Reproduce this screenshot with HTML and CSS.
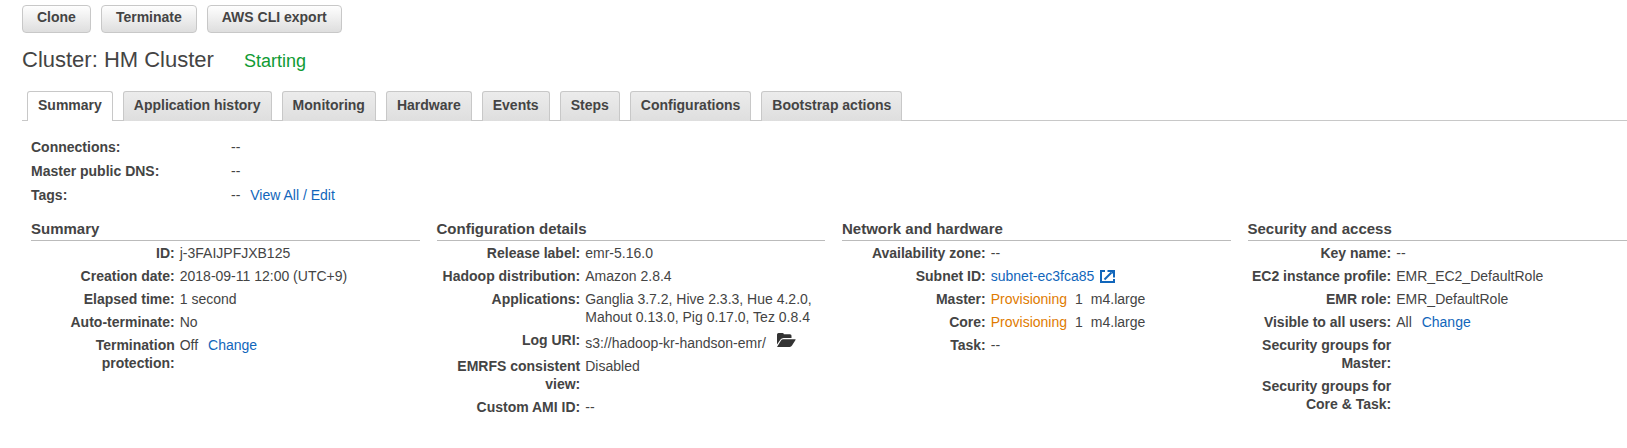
FILE: index.html
```html
<!DOCTYPE html>
<html lang="en">
<head>
<meta charset="utf-8">
<title>Cluster: HM Cluster</title>
<link rel="stylesheet" href="styles.css">
</head>
<body>
<main class="page">
  <div class="toolbar">
    <button type="button" class="btn">Clone</button>
    <button type="button" class="btn">Terminate</button>
    <button type="button" class="btn">AWS CLI export</button>
  </div>

  <header class="title-row">
    <h1 class="title">Cluster: HM Cluster</h1>
    <span class="state">Starting</span>
  </header>

  <div class="tabs" role="tablist">
    <button type="button" role="tab" class="tab tab-active" aria-selected="true">Summary</button>
    <button type="button" role="tab" class="tab">Application history</button>
    <button type="button" role="tab" class="tab">Monitoring</button>
    <button type="button" role="tab" class="tab">Hardware</button>
    <button type="button" role="tab" class="tab">Events</button>
    <button type="button" role="tab" class="tab">Steps</button>
    <button type="button" role="tab" class="tab">Configurations</button>
    <button type="button" role="tab" class="tab">Bootstrap actions</button>
  </div>

  <dl class="overview">
    <dt>Connections:</dt><dd>--</dd>
    <dt>Master public DNS:</dt><dd>--</dd>
    <dt>Tags:</dt><dd>-- <a class="link link-after" href="#tags">View All / Edit</a></dd>
  </dl>

  <div class="columns">
    <section class="panel">
      <h2 class="panel-title">Summary</h2>
      <dl class="details">
        <dt>ID:</dt><dd>j-3FAIJPFJXB125</dd>
        <dt>Creation date:</dt><dd>2018-09-11 12:00 (UTC+9)</dd>
        <dt>Elapsed time:</dt><dd>1 second</dd>
        <dt>Auto-terminate:</dt><dd>No</dd>
        <dt>Termination protection:</dt><dd>Off <a class="link link-after" href="#protection">Change</a></dd>
      </dl>
    </section>

    <section class="panel">
      <h2 class="panel-title">Configuration details</h2>
      <dl class="details">
        <dt>Release label:</dt><dd>emr-5.16.0</dd>
        <dt>Hadoop distribution:</dt><dd>Amazon 2.8.4</dd>
        <dt>Applications:</dt><dd>Ganglia 3.7.2, Hive 2.3.3, Hue 4.2.0, Mahout 0.13.0, Pig 0.17.0, Tez 0.8.4</dd>
        <dt>Log URI:</dt>
        <dd class="log">s3://hadoop-kr-handson-emr/
          <a class="folder" href="#logs" aria-label="Open log folder"><svg width="20" height="16" viewBox="0 0 20 16" fill="#333"><path d="M1 12.600V2.500Q1 1 2.500 1H6.500Q7.800 1 7.800 2.200H14Q15.500 2.200 15.500 3.700V6H7.500Q5.500 6 4.500 7.500Z"/><path d="M1 15L5 8.500Q5.800 7.200 7.300 7.200H19.200Q20 7.200 19.500 8L16 13.600Q15.200 15 13.700 15Z"/></svg></a></dd>
        <dt>EMRFS consistent view:</dt><dd>Disabled</dd>
        <dt>Custom AMI ID:</dt><dd>--</dd>
      </dl>
    </section>

    <section class="panel">
      <h2 class="panel-title">Network and hardware</h2>
      <dl class="details">
        <dt>Availability zone:</dt><dd>--</dd>
        <dt>Subnet ID:</dt>
        <dd><a class="link external" href="#subnet">subnet-ec3fca85<svg width="15" height="13" viewBox="0 0 15 13" fill="none" stroke="#1166bb" stroke-width="2"><path d="M5 1H1V12H14V9"/><path d="M4.500 9.500L11.500 2.500"/><path d="M7.500 0H15V7.500H13V4L11 2H7.500Z" fill="#1166bb" stroke="none"/></svg></a></dd>
        <dt>Master:</dt><dd class="group"><span class="pending">Provisioning</span><span>1</span><span>m4.large</span></dd>
        <dt>Core:</dt><dd class="group"><span class="pending">Provisioning</span><span>1</span><span>m4.large</span></dd>
        <dt>Task:</dt><dd>--</dd>
      </dl>
    </section>

    <section class="panel">
      <h2 class="panel-title">Security and access</h2>
      <dl class="details">
        <dt>Key name:</dt><dd>--</dd>
        <dt>EC2 instance profile:</dt><dd>EMR_EC2_DefaultRole</dd>
        <dt>EMR role:</dt><dd>EMR_DefaultRole</dd>
        <dt>Visible to all users:</dt><dd>All <a class="link link-after" href="#visibility">Change</a></dd>
        <dt>Security groups for Master:</dt><dd></dd>
        <dt>Security groups for Core &amp; Task:</dt><dd></dd>
      </dl>
    </section>
  </div>
</main>
</body>
</html>
```

FILE: styles.css
```css
* {
  box-sizing: border-box;
}

body {
  margin: 0;
  background: #fff;
  color: #444;
  font: 14px/18px "Liberation Sans", Arial, sans-serif;
  overflow-x: hidden;
}

h1, h2, dl, dd {
  margin: 0;
}

.page {
  padding: 5px 0 32px 22px;
}

.toolbar {
  display: flex;
  gap: 10px;
}

.btn {
  height: 28px;
  padding: 0 14px 4px;
  border: 1px solid #c8c8c8;
  border-radius: 4px;
  background: linear-gradient(#fefefe, #dedede);
  color: #444;
  font: bold 14px/18px "Liberation Sans", Arial, sans-serif;
}

.title-row {
  display: flex;
  align-items: baseline;
  gap: 30px;
  margin-top: 13px;
}

.title {
  font-size: 22px;
  line-height: 28px;
  font-weight: normal;
}

.state {
  color: #0f9b34;
  font-size: 18px;
}

.tabs {
  display: flex;
  gap: 10px;
  margin-top: 17px;
  padding-left: 5px;
  border-bottom: 1px solid #c8c8c8;
}

.tab {
  height: 30px;
  margin: 0 0 -1px;
  padding: 0 10px 4px;
  border: 1px solid #c8c8c8;
  border-bottom: 0;
  border-radius: 3px 3px 0 0;
  background: linear-gradient(#ececec, #dedede);
  color: #444;
  font: bold 14px/18px "Liberation Sans", Arial, sans-serif;
}

.tab-active {
  background: #fff;
}

.overview {
  display: grid;
  grid-template-columns: 200px 1fr;
  row-gap: 6px;
  margin: 17px 0 0 9px;
}

dt {
  font-weight: bold;
}

.link {
  color: #1166bb;
  text-decoration: none;
}

.link-after {
  margin-left: 6px;
}

.columns {
  display: grid;
  grid-template-columns: repeat(4, 1fr);
  column-gap: 17px;
  margin: 16px -9px 0 9px;
}

.panel-title {
  padding-bottom: 2px;
  border-bottom: 1px solid #bbb;
  font-size: 15px;
  line-height: 18px;
}

.details {
  display: grid;
  grid-template-columns: 37% 1fr;
  gap: 5px;
  margin-top: 3px;
}

.details dt {
  text-align: right;
}

.group {
  display: flex;
  gap: 8px;
}

.pending {
  color: #e07b00;
}

.log {
  display: flex;
  align-items: flex-end;
  gap: 10px;
  height: 21px;
}

.folder {
  height: 20px;
}

.folder svg {
  display: block;
}

.external {
  display: inline-flex;
  align-items: center;
  gap: 6px;
}
```
